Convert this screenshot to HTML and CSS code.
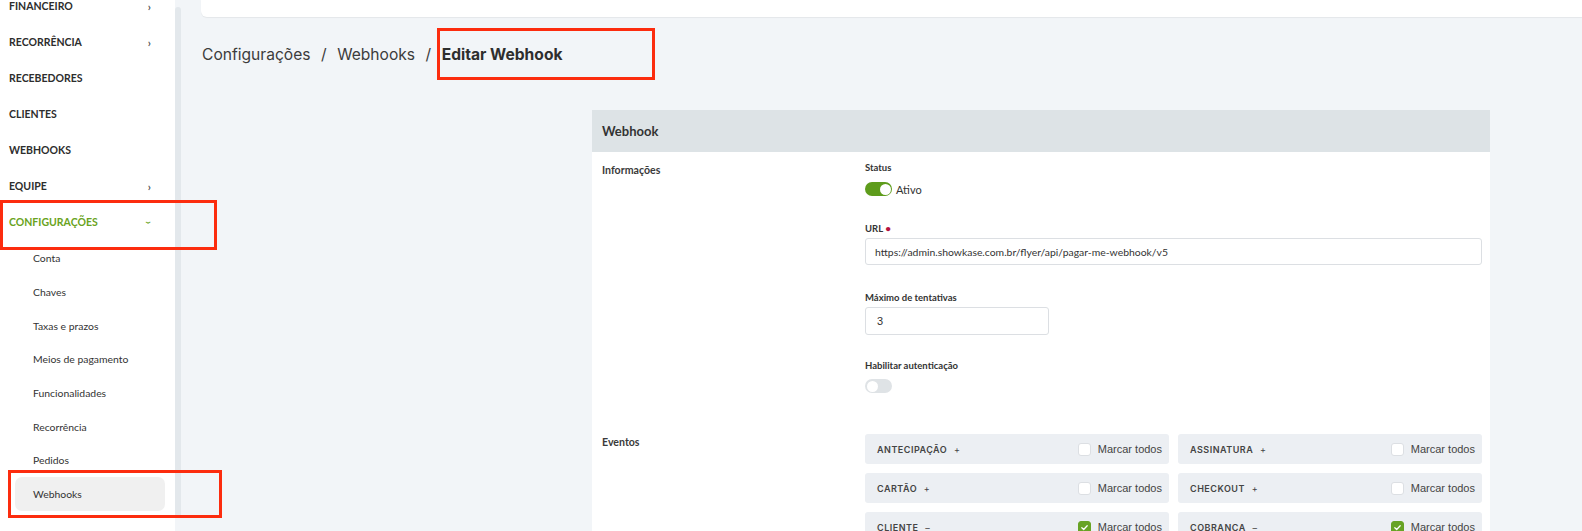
FILE: index.html
```html
<!DOCTYPE html>
<html lang="pt-BR">
<head>
<meta charset="utf-8">
<title>Editar Webhook</title>
<link rel="stylesheet" href="styles.css">
</head>
<body>
<div class="app">
  <aside class="sidebar">
    <nav class="nav">
      <div class="nav-item"><span>FINANCEIRO</span><span class="chev">›</span></div>
      <div class="nav-item"><span>RECORRÊNCIA</span><span class="chev">›</span></div>
      <div class="nav-item"><span>RECEBEDORES</span></div>
      <div class="nav-item"><span>CLIENTES</span></div>
      <div class="nav-item"><span>WEBHOOKS</span></div>
      <div class="nav-item"><span>EQUIPE</span><span class="chev">›</span></div>
      <div class="nav-item active"><span>CONFIGURAÇÕES</span><span class="chev down">›</span></div>
      <div class="sub">
        <div class="sub-item">Conta</div>
        <div class="sub-item">Chaves</div>
        <div class="sub-item">Taxas e prazos</div>
        <div class="sub-item">Meios de pagamento</div>
        <div class="sub-item">Funcionalidades</div>
        <div class="sub-item">Recorrência</div>
        <div class="sub-item">Pedidos</div>
        <div class="sub-item current">Webhooks</div>
      </div>
    </nav>
  </aside>
  <div class="scrolltrack"></div>
  <main class="main">
    <div class="topbar"></div>
    <div class="breadcrumb">
      <span>Configurações</span><span class="sep">/</span><span>Webhooks</span><span class="sep">/</span><strong>Editar Webhook</strong>
    </div>
    <section class="card">
      <header class="card-head">Webhook</header>
      <div class="card-row">
        <div class="row-title">Informações</div>
        <div class="fields">
          <div class="field">
            <div class="label">Status</div>
            <div class="switch-line"><span class="switch on"><span class="knob"></span></span><span class="switch-text">Ativo</span></div>
          </div>
          <div class="field f-url">
            <div class="label">URL <span class="req">•</span></div>
            <div class="input">https://admin.showkase.com.br/flyer/api/pagar-me-webhook/v5</div>
          </div>
          <div class="field f-max">
            <div class="label">Máximo de tentativas</div>
            <div class="input small">3</div>
          </div>
          <div class="field f-auth">
            <div class="label">Habilitar autenticação</div>
            <div class="switch-line tight"><span class="switch"><span class="knob"></span></span></div>
          </div>
        </div>
      </div>
      <div class="card-row events-row">
        <div class="row-title ev-title">Eventos</div>
        <div class="events">
          <div class="event"><span class="ev-name">ANTECIPAÇÃO <span class="pm">+</span></span><span class="mark"><span class="cb"></span>Marcar todos</span></div>
          <div class="event"><span class="ev-name">ASSINATURA <span class="pm">+</span></span><span class="mark"><span class="cb"></span>Marcar todos</span></div>
          <div class="event"><span class="ev-name">CARTÃO <span class="pm">+</span></span><span class="mark"><span class="cb"></span>Marcar todos</span></div>
          <div class="event"><span class="ev-name">CHECKOUT <span class="pm">+</span></span><span class="mark"><span class="cb"></span>Marcar todos</span></div>
          <div class="event"><span class="ev-name">CLIENTE <span class="pm">–</span></span><span class="mark"><span class="cb checked"><svg viewBox="0 0 10 10" width="9" height="9"><path d="M2 5.2 L4.1 7.2 L8 3" fill="none" stroke="#fff" stroke-width="1.4" stroke-linecap="round" stroke-linejoin="round"/></svg></span>Marcar todos</span></div>
          <div class="event"><span class="ev-name">COBRANCA <span class="pm">–</span></span><span class="mark"><span class="cb checked"><svg viewBox="0 0 10 10" width="9" height="9"><path d="M2 5.2 L4.1 7.2 L8 3" fill="none" stroke="#fff" stroke-width="1.4" stroke-linecap="round" stroke-linejoin="round"/></svg></span>Marcar todos</span></div>
        </div>
      </div>
    </section>
  </main>
</div>
<div class="annot a-config"></div>
<div class="annot a-webhooks"></div>
<div class="annot a-crumb"></div>
</body>
</html>
```

FILE: styles.css
```css
* { box-sizing: border-box; }
html, body { margin: 0; padding: 0; }
body {
  width: 1582px;
  height: 531px;
  overflow: hidden;
  background: #f2f5f8;
  font-family: Lato, "Liberation Sans", sans-serif;
  color: #333;
  position: relative;
}
.app {
  display: flex;
  height: 531px;
}
.sidebar {
  width: 175px;
  flex: none;
  background: #fff;
  overflow: hidden;
}
.nav { margin-top: -12px; }
.nav-item {
  height: 36px;
  display: flex;
  align-items: center;
  justify-content: space-between;
  padding: 0 24px 0 9px;
  font-size: 10.5px;
  font-weight: 700;
  color: #2d2d2d;
}
.chev {
  font-size: 11px;
  font-weight: 700;
  color: #555;
}
.chev.down {
  display: inline-block;
  transform: rotate(90deg);
  color: #69a321;
}
.nav-item.active { color: #69a321; }
.sub { margin-top: 1.5px; }
.sub-item {
  height: 33.7px;
  display: flex;
  align-items: center;
  margin: 0 10px 0 15px;
  padding-left: 18px;
  font-size: 10.4px;
  color: #333;
  border-radius: 7px;
}
.sub-item.current { background: #f0f0f0; }
.scrolltrack {
  width: 6px;
  flex: none;
  margin-top: 7px;
  height: 511px;
  background: #e3e8ec;
  border-radius: 3px;
}
.main {
  flex: 1;
  min-width: 0;
}
.topbar {
  margin-left: 20px;
  height: 17px;
  background: #fff;
  border-bottom-left-radius: 6px;
  box-shadow: 0 1px 1px rgba(0,0,0,0.06);
}
.breadcrumb {
  margin: 26px 0 0 21px;
  height: 24px;
  line-height: 24px;
  font-family: Inter, "Open Sans", sans-serif;
  font-size: 15.6px;
  color: #3c3c3c;
}
.breadcrumb .sep { margin: 0 10.5px; }
.breadcrumb strong { font-weight: 700; color: #2e2e2e; }
.card {
  margin: 43px 0 0 411px;
  width: 898px;
  background: #fff;
}
.card-head {
  height: 42px;
  background: #dde3e6;
  padding-left: 10px;
  display: flex;
  align-items: center;
  font-size: 13px;
  font-weight: 700;
  color: #333;
}
.card-row {
  display: grid;
  grid-template-columns: 263px 1fr;
  padding: 0 8px 0 10px;
}
.row-title {
  padding-top: 12px;
  font-size: 10.6px;
  font-weight: 700;
  color: #3a3a3a;
  line-height: 12px;
}
.fields { padding-top: 10px; padding-bottom: 41px; }
.label {
  font-size: 9.5px;
  line-height: 12px;
  font-weight: 700;
  color: #333;
}
.req { color: #b5123f; font-size: 10px; }
.switch-line {
  display: flex;
  align-items: center;
  margin-top: 8px;
  height: 14px;
}
.switch-line.tight { margin-top: 7px; }
.switch {
  width: 27px;
  height: 14px;
  border-radius: 7px;
  background: #dfe3e6;
  position: relative;
  display: inline-block;
}
.switch .knob {
  position: absolute;
  top: 1.5px;
  left: 1.5px;
  width: 11px;
  height: 11px;
  border-radius: 50%;
  background: #fff;
}
.switch.on { background: #5e9c1c; }
.switch.on .knob { left: 14.5px; }
.switch-text {
  margin-left: 4px;
  font-size: 11px;
  color: #333;
}
.f-url { margin-top: 26px; }
.f-max { margin-top: 27px; }
.f-auth { margin-top: 25px; }
.input {
  margin-top: 3px;
  height: 27px;
  border: 1px solid #dcdfe3;
  border-radius: 3px;
  padding-left: 9px;
  display: flex;
  align-items: center;
  font-size: 10.4px;
  color: #333;
}
.input.small {
  width: 184px;
  height: 28px;
  padding-left: 11px;
  font-family: "Liberation Sans", sans-serif;
  font-size: 11px;
}
.events-row { padding-bottom: 20px; }
.ev-title { padding-top: 2px; }
.events {
  display: grid;
  grid-template-columns: 1fr 1fr;
  gap: 9px;
}
.event {
  height: 30px;
  background: #eceff3;
  border-radius: 3px;
  display: flex;
  align-items: center;
  justify-content: space-between;
  padding: 0 7px 0 12px;
}
.ev-name {
  font-family: Inter, "Open Sans", sans-serif;
  font-size: 9px;
  font-weight: 600;
  letter-spacing: 0.5px;
  color: #444;
}
.pm { margin-left: 4px; font-weight: 400; }
.mark {
  display: flex;
  align-items: center;
  font-family: "Liberation Sans", Arial, sans-serif;
  font-size: 11px;
  color: #444;
}
.cb {
  width: 13px;
  height: 13px;
  border: 1px solid #dcdfe3;
  border-radius: 3px;
  background: #fff;
  margin-right: 7px;
  display: flex;
  align-items: center;
  justify-content: center;
}
.cb.checked { background: #67a324; border-color: #67a324; }
.annot {
  position: absolute;
  border: 3px solid #fc2c0e;
  pointer-events: none;
}
.a-config { left: 0; top: 200px; width: 217px; height: 50px; }
.a-webhooks { left: 8px; top: 470px; width: 214px; height: 48px; }
.a-crumb { left: 437px; top: 28px; width: 218px; height: 52px; }
```
